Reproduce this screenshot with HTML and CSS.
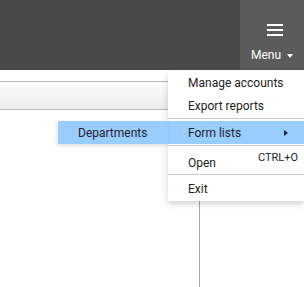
FILE: index.html
```html
<!DOCTYPE html>
<html lang="en">
<head>
<meta charset="UTF-8">
<title>Menu</title>
<link rel="stylesheet" href="styles.css">
</head>
<body>

<!-- Top bar -->
<div class="topbar">
    <div class="topbar-fill"></div>
    <div class="menu-button">
        <div class="burger"><span></span><span></span><span></span></div>
        <div class="menu-label">Menu <span class="caret"></span></div>
    </div>
</div>

<div class="toolbar"></div>

<div class="workspace">
    <div class="left-pane"></div>
    <div class="right-pane"></div>
</div>

<!-- Dropdown menu -->
<ul class="dropdown">
    <li class="item">Manage accounts</li>
    <li class="item">Export reports</li>
    <li class="sep"></li>
    <li class="item active has-sub">
        Form lists <span class="sub-arrow"></span>
        <ul class="submenu">
            <li class="item active">Departments</li>
        </ul>
    </li>
    <li class="sep"></li>
    <li class="item open">Open <span class="shortcut">CTRL+O</span></li>
    <li class="sep"></li>
    <li class="item">Exit</li>
</ul>

</body>
</html>
```

FILE: styles.css
```css
body {
    margin: 0;
    font-family: Roboto, "Liberation Sans", Arial, sans-serif;
    background: #fff;
    color: #222;
    height: 287px;
    overflow: hidden;
}

.topbar {
    display: flex;
    height: 70px;
    background: #494949;
}

.topbar-fill {
    flex: 1;
}

.menu-button {
    width: 64px;
    background: #5b5b5b;
    color: #fff;
    display: flex;
    flex-direction: column;
    align-items: center;
}

.burger {
    margin-top: 24px;
    margin-left: 6px;
    display: flex;
    flex-direction: column;
    gap: 3px;
}

.burger span {
    display: block;
    width: 16px;
    height: 2px;
    background: #fff;
}

.menu-label {
    margin-top: 12px;
    font-size: 12px;
    display: flex;
    align-items: center;
    gap: 6px;
}

.caret {
    width: 0;
    height: 0;
    border-left: 3px solid transparent;
    border-right: 3px solid transparent;
    border-top: 4px solid #fff;
    margin-top: 2px;
}

.toolbar {
    margin-top: 11px;
    height: 27px;
    border-top: 1px solid #b9b9b9;
    border-bottom: 1px solid #b9b9b9;
    background: linear-gradient(#fdfdfd, #ececec);
}

.workspace {
    display: flex;
    height: 178px;
}

.left-pane {
    width: 199px;
    border-right: 1px solid #a8a8a8;
}

.right-pane {
    flex: 1;
}

ul {
    list-style: none;
    margin: 0;
    padding: 0;
}

.dropdown {
    position: absolute;
    top: 71px;
    left: 168px;
    width: 136px;
    background: #fff;
    box-shadow: 0 3px 7px rgba(0, 0, 0, 0.18);
    font-size: 12px;
    padding-bottom: 1px;
}

.item {
    position: relative;
    display: flex;
    align-items: center;
    height: 23px;
    padding-left: 20px;
    white-space: nowrap;
}

.item.active {
    background: #99ccff;
}

.sep {
    height: 1px;
    background: #c9c9c9;
    margin: 1px 0 2px;
}

.sub-arrow {
    position: absolute;
    right: 16px;
    top: 9px;
    width: 0;
    height: 0;
    border-top: 3px solid transparent;
    border-bottom: 3px solid transparent;
    border-left: 4px solid #222;
}

.item.open {
    height: 25px;
    align-items: flex-end;
    padding-bottom: 3px;
    box-sizing: border-box;
}

.shortcut {
    position: absolute;
    right: 6px;
    top: 3px;
    font-size: 11px;
}

.submenu {
    position: absolute;
    top: 0;
    right: 100%;
    width: 110px;
    box-shadow: -1px 2px 4px rgba(0, 0, 0, 0.12);
}
```
